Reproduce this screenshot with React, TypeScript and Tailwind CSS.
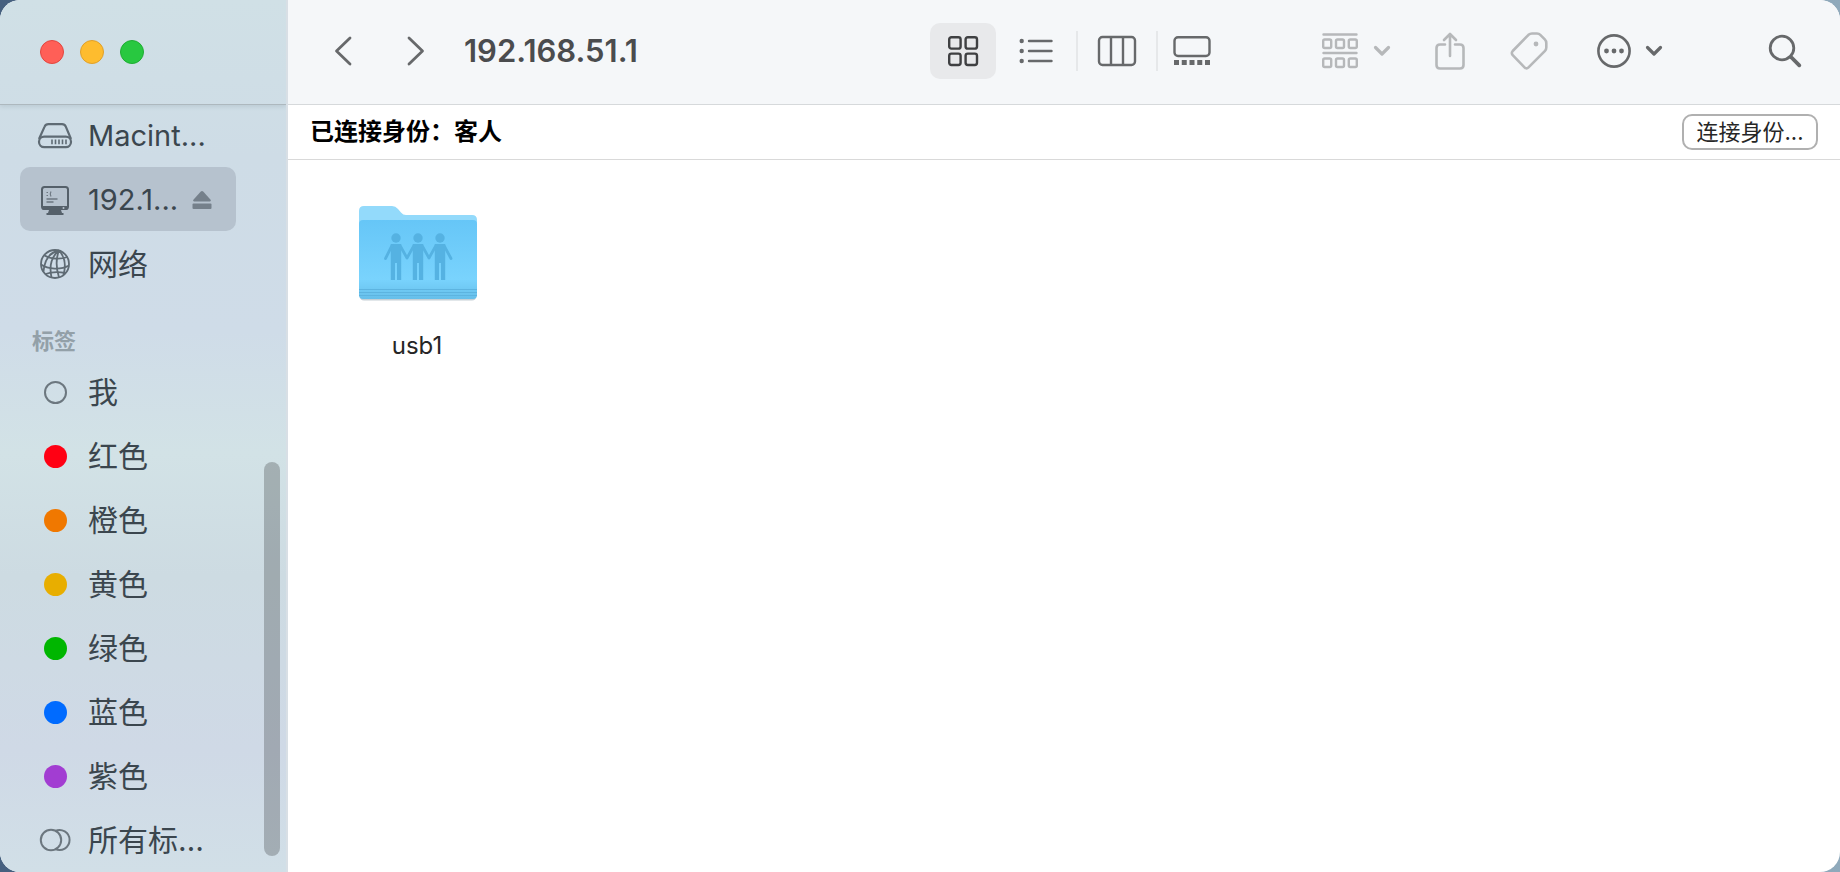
import type { ReactNode } from "react";

const tags = [
  { name: "我", color: "border-2 border-[#6c777f]" },
  { name: "红色", color: "bg-[#ff0013]" },
  { name: "橙色", color: "bg-[#f07800]" },
  { name: "黄色", color: "bg-[#e8ae00]" },
  { name: "绿色", color: "bg-[#00b600]" },
  { name: "蓝色", color: "bg-[#006bff]" },
  { name: "紫色", color: "bg-[#a23dd2]" },
];

function DiskIcon() {
  return (
    <svg width="36" height="28" viewBox="0 0 36 28" fill="none" stroke="#5f6b74" strokeWidth="2.2">
      <path d="M2 17 7.6 4.6Q8.6 2.2 11.4 2.2H25Q27.8 2.2 28.8 4.6L34 17" />
      <rect x="2" y="14.6" width="32" height="10.6" rx="5.2" />
      <path d="M15 17.6v4.6M18.5 17.6v4.6M22 17.6v4.6M25.5 17.6v4.6M29 17.6v4.6" strokeWidth="1.6" />
    </svg>
  );
}

function DisplayIcon() {
  return (
    <svg width="30" height="30" viewBox="0 0 30 30" fill="none">
      <rect x="2" y="2" width="26" height="22" rx="2.5" stroke="#55606a" strokeWidth="2" />
      <path d="M2 21h26v2q0 2-2 2H4q-2 0-2-2zM9 25h12l1 3h1.5v2h-17v-2H8z" fill="#55606a" />
      <circle cx="23.5" cy="23" r="1" fill="#b8c3cf" />
      <path d="M6.5 7.5h1.5M6.5 10.5h1.5M11 6.5q-1.5 2.5 0 5" stroke="#6c7781" strokeWidth="1.2" />
      <path d="M6.5 14h11M6.5 17h7" stroke="#6c7781" strokeWidth="1.6" />
    </svg>
  );
}

function GlobeIcon() {
  return (
    <svg width="32" height="32" viewBox="0 0 32 32" fill="none" stroke="#5f6b74" strokeWidth="1.8">
      <circle cx="16" cy="16" r="14" />
      <path d="M20 2.5C12 9 10 18 12.500 29.500M20 2.500C17 10 17 20 20 29.500M20 2.500C26 9 27 18 24.500 27M20 2.500C10 4.500 5.500 12 4.500 23.500" />
      <path d="M5.500 7.500C12 11.500 22 11.500 28.500 9M2 16.500C9 21.500 22 22 30 17.500M6.500 26C12 24 21 24 26.500 25" />
    </svg>
  );
}

function EjectIcon() {
  return (
    <svg width="20" height="20" viewBox="0 0 20 20" fill="#75808b">
      <path d="M8.8 1.5q1.2-1.2 2.4 0l7.4 8.2q1 1.6-.8 1.8H2.2q-1.8-.2-.8-1.8z" />
      <rect x="0.5" y="13.5" width="19" height="5.5" rx="1" />
    </svg>
  );
}

function AllTagsIcon() {
  return (
    <svg width="32" height="24" viewBox="0 0 32 24" fill="none" stroke="#6c777f" strokeWidth="2">
      <circle cx="12" cy="12" r="10.2" />
      <path d="M16 3.1A10 10 0 1 1 16 20.9" />
    </svg>
  );
}

function Chevron() {
  return (
    <svg width="18" height="12" viewBox="0 0 18 12" fill="none" stroke="currentColor" strokeWidth="3.2" strokeLinecap="round" strokeLinejoin="round">
      <path d="M2.5 2.5 9 9l6.5-6.500" />
    </svg>
  );
}

function FolderIcon() {
  return (
    <svg width="122" height="98" viewBox="0 0 122 98" className="ml-0.5">
      <defs>
        <linearGradient id="folder" x1="0" y1="0" x2="0" y2="1">
          <stop offset="0" stopColor="#66c6f7" />
          <stop offset="0.75" stopColor="#79d3fd" />
          <stop offset="1" stopColor="#66bfea" />
        </linearGradient>
      </defs>
      <rect x="3" y="84" width="116" height="11.5" rx="4" fill="#c6d0d6" />
      <path d="M2 6q0-5 5-5h28q3.5 0 6 3l3 3.500q2 2.500 5 2.500h66q5 0 5 5v14H2z" fill="#93dafb" />
      <path d="M2 19q0-4 4-4h110q4 0 4 4v71q0 4-4 4H6q-4 0-4-4z" fill="url(#folder)" />
      <path d="M2 84.5h118M2 87.5h118M2 90.5h118" stroke="#5db4e0" strokeWidth="1" />
      <g fill="#55b2e2">
        {[39, 61, 83].map((x) => (
          <g key={x} transform={`translate(${x} 0)`}>
            <circle cx="0" cy="33" r="4.7" />
            <path d="M-5.2 39h10.4v36H1V58h-2v17h-4.2z" />
          </g>
        ))}
      </g>
      <path
        d="M35 40.5 28.5 53.5M43 40.5l7 12.5 7-12.5M65 40.5l7 12.5 7-12.5M87 40.5l7 13"
        fill="none"
        stroke="#55b2e2"
        strokeWidth="2.8"
        strokeLinejoin="round"
        strokeLinecap="round"
      />
    </svg>
  );
}

function SidebarItem({ icon, label, active = false }: { icon: ReactNode; label: string; active?: boolean }) {
  return (
    <li
      className={`mx-5 flex h-16 items-center rounded-[10px] pt-0.5 ${active ? "w-[216px] bg-[#b6c2ce]" : ""}`}
    >
      <a href="#" className="flex min-w-0 items-center whitespace-nowrap">
        <span className="flex w-[68px] shrink-0 items-center justify-center pl-0.5">{icon}</span>
        <span>{label}</span>
      </a>
      {active && (
        <button type="button" aria-label="推出" className="mr-6 ml-auto">
          <EjectIcon />
        </button>
      )}
    </li>
  );
}

function Sidebar() {
  return (
    <aside className="relative flex w-72 shrink-0 flex-col overflow-hidden border-r-2 border-[#d8dfe5] bg-[linear-gradient(#d0e0e6_0%,#cedce6_18%,#cfdce8_38%,#d2e2e6_52%,#cddbe2_66%,#cfd9e6_86%,#d1dfe7_100%)] text-[#3b464e]">
      <div className="z-10 -mb-0.5 flex h-[105px] shrink-0 items-center gap-4 border-b border-[#adb8be] pl-10 shadow-[0_2px_4px_rgba(60,80,90,0.12)]">
        <button type="button" aria-label="关闭" className="size-6 rounded-full border border-[#e2463f] bg-[#ff5f57]" />
        <button type="button" aria-label="最小化" className="size-6 rounded-full border border-[#e0a02a] bg-[#febc2e]" />
        <button type="button" aria-label="缩放" className="size-6 rounded-full border border-[#1fad33] bg-[#28c840]" />
      </div>
      <nav>
        <ul className="text-[29px]">
          <SidebarItem icon={<DiskIcon />} label="Macint..." />
          <SidebarItem icon={<DisplayIcon />} label="192.1..." active />
        </ul>
        <ul className="text-[30px]">
          <SidebarItem icon={<GlobeIcon />} label="网络" />
        </ul>
        <h2 className="flex h-16 items-center px-8 pt-7 text-[22px] font-bold text-[#93a0a8]">标签</h2>
        <ul className="text-[30px]">
          {tags.map((tag) => (
            <SidebarItem
              key={tag.name}
              icon={<span className={`size-[23px] rounded-full ${tag.color}`} />}
              label={tag.name}
            />
          ))}
          <SidebarItem icon={<AllTagsIcon />} label="所有标…" />
        </ul>
      </nav>
      <div className="absolute right-1.5 bottom-4 h-[394px] w-4 rounded-full bg-black/22" />
    </aside>
  );
}

function Toolbar() {
  return (
    <header className="flex h-[105px] shrink-0 items-center border-b border-[#d6d9db] bg-[#f5f7f9] pr-[37px] pb-0.5 text-[#67696b]">
      <button type="button" aria-label="返回" className="ml-11">
        <svg width="22" height="32" viewBox="0 0 22 32" fill="none" stroke="currentColor" strokeWidth="2.8" strokeLinecap="round" strokeLinejoin="round">
          <path d="M18 3 4.5 16 18 29" />
        </svg>
      </button>
      <button type="button" aria-label="前进" className="ml-[51px]">
        <svg width="22" height="32" viewBox="0 0 22 32" fill="none" stroke="currentColor" strokeWidth="2.8" strokeLinecap="round" strokeLinejoin="round">
          <path d="M4 3 17.500 16 4 29" />
        </svg>
      </button>
      <h1 className="ml-[37px] text-[31px] font-semibold text-[#4b4c4e]">192.168.51.1</h1>

      <div className="ml-auto flex items-center">
        <button type="button" aria-label="图标" className="flex h-14 w-[66px] items-center justify-center rounded-[10px] bg-[#e8e9eb] text-[#3f4042]">
          <svg width="32" height="32" viewBox="0 0 32 32" fill="none" stroke="currentColor" strokeWidth="2.4">
            <rect x="2.2" y="2.2" width="11.4" height="11.4" rx="2.2" />
            <rect x="18.6" y="2.2" width="11.4" height="11.4" rx="2.2" />
            <rect x="2.2" y="18.6" width="11.4" height="11.4" rx="2.2" />
            <rect x="18.6" y="18.6" width="11.4" height="11.4" rx="2.2" />
          </svg>
        </button>
        <button type="button" aria-label="列表" className="flex w-20 items-center justify-center">
          <svg width="34" height="26" viewBox="0 0 34 26" fill="none" stroke="currentColor" strokeWidth="2.4" strokeLinecap="round">
            <path d="M10 3h22.5M10 13h22.5M10 23h22.5" />
            <g fill="currentColor" stroke="none">
              <circle cx="2.7" cy="3" r="2.2" />
              <circle cx="2.7" cy="13" r="2.2" />
              <circle cx="2.7" cy="23" r="2.2" />
            </g>
          </svg>
        </button>
        <span className="h-10 w-0.5 bg-[#e6e8ea]" />
        <button type="button" aria-label="分栏" className="flex w-[78px] items-center justify-center">
          <svg width="40" height="32" viewBox="0 0 40 32" fill="none" stroke="currentColor" strokeWidth="2.4">
            <rect x="2" y="2" width="36" height="28" rx="3.5" />
            <path d="M14 2v28M26 2v28" />
          </svg>
        </button>
        <span className="h-10 w-0.5 bg-[#e6e8ea]" />
        <button type="button" aria-label="画廊" className="flex w-[68px] items-center justify-center">
          <svg width="38" height="32" viewBox="0 0 38 32" fill="none" stroke="currentColor" strokeWidth="2.4">
            <rect x="1.5" y="2.2" width="35" height="18.8" rx="3.5" />
            <path d="M1 27.5h37" strokeWidth="5" strokeDasharray="5 2.75" />
          </svg>
        </button>
      </div>

      <button type="button" aria-label="群组" className="ml-24 flex items-center gap-[15px] text-[#b6b8ba]">
        <svg width="36" height="36" viewBox="0 0 36 36" fill="none" stroke="currentColor" strokeWidth="2.4">
          <path d="M1.5 1.5h33M1.5 20h33" strokeLinecap="round" />
          {[6.5, 25.5].map((y) => (
            <g key={y}>
              <rect x="1.2" y={y} width="8" height="8.5" rx="1.5" />
              <rect x="14" y={y} width="8" height="8.5" rx="1.5" />
              <rect x="26.8" y={y} width="8" height="8.5" rx="1.5" />
            </g>
          ))}
        </svg>
        <Chevron />
      </button>
      <button type="button" aria-label="共享" className="ml-11 text-[#b6b8ba]">
        <svg width="30" height="40" viewBox="0 0 30 40" fill="none" stroke="currentColor" strokeWidth="2.6" strokeLinecap="round" strokeLinejoin="round">
          <path d="M10 13.5H5Q1.5 13.5 1.5 17v17Q1.5 37.5 5 37.5h20q3.5 0 3.5-3.500V17q0-3.500-3.500-3.500h-5" />
          <path d="M15 25V3M9 9l6-6 6 6" />
        </svg>
      </button>
      <button type="button" aria-label="标签" className="ml-[45px] text-[#b6b8ba]">
        <svg width="38" height="38" viewBox="0 0 38 38" fill="none" stroke="currentColor" strokeWidth="2.6" strokeLinejoin="round">
          <path d="M18.5 2.8Q20 1.500 22 1.500h5q2 0 3.300 1.300l4.500 4.500Q36.300 8.800 36.300 11v4.500q0 2-1.300 3.300L18.500 35.300Q16.500 37.300 14.500 35.300L2.700 23.200Q1 21 2.700 19z" />
          <circle cx="26" cy="12" r="2.4" fill="currentColor" stroke="none" />
        </svg>
      </button>
      <button type="button" aria-label="操作" className="ml-12 flex items-center gap-[13px]">
        <svg width="36" height="36" viewBox="0 0 36 36" fill="none" stroke="currentColor" strokeWidth="2.6">
          <circle cx="18" cy="18" r="15.6" />
          <g fill="currentColor" stroke="none">
            <circle cx="10.5" cy="18" r="2.4" />
            <circle cx="18" cy="18" r="2.4" />
            <circle cx="25.5" cy="18" r="2.4" />
          </g>
        </svg>
        <Chevron />
      </button>
      <button type="button" aria-label="搜索" className="ml-[104px]">
        <svg width="36" height="36" viewBox="0 0 36 36" fill="none" stroke="currentColor" strokeWidth="2.8" strokeLinecap="round">
          <circle cx="15" cy="15" r="11.8" />
          <path d="M24 24l8.300 8.300" strokeWidth="3.8" />
        </svg>
      </button>
    </header>
  );
}

function App() {
  return (
    <div className="h-screen bg-[linear-gradient(90deg,#46607f,#5c7c9a_50%,#8fa9bb)] font-['Inter','Noto_Sans_CJK_SC',sans-serif]">
      <div className="flex h-full overflow-hidden rounded-[20px] bg-white">
        <Sidebar />
        <div className="flex min-w-0 flex-1 flex-col">
          <Toolbar />
          <div className="flex h-[55px] shrink-0 items-center justify-between border-b border-[#d9d9d9] px-[22px]">
            <p className="text-2xl font-bold text-black">已连接身份：客人</p>
            <button type="button" className="flex h-9 w-[136px] items-center justify-center rounded-[10px] border-2 border-[#b0b0b0] bg-white text-[22px] text-[#262626]">
              连接身份...
            </button>
          </div>
          <main className="flex-1 px-[49px] pt-[45px]">
            <button type="button" className="flex w-40 flex-col items-center gap-[27px] text-2xl text-[#262626]">
              <FolderIcon />
              <span>usb1</span>
            </button>
          </main>
        </div>
      </div>
    </div>
  );
}

export default App;
